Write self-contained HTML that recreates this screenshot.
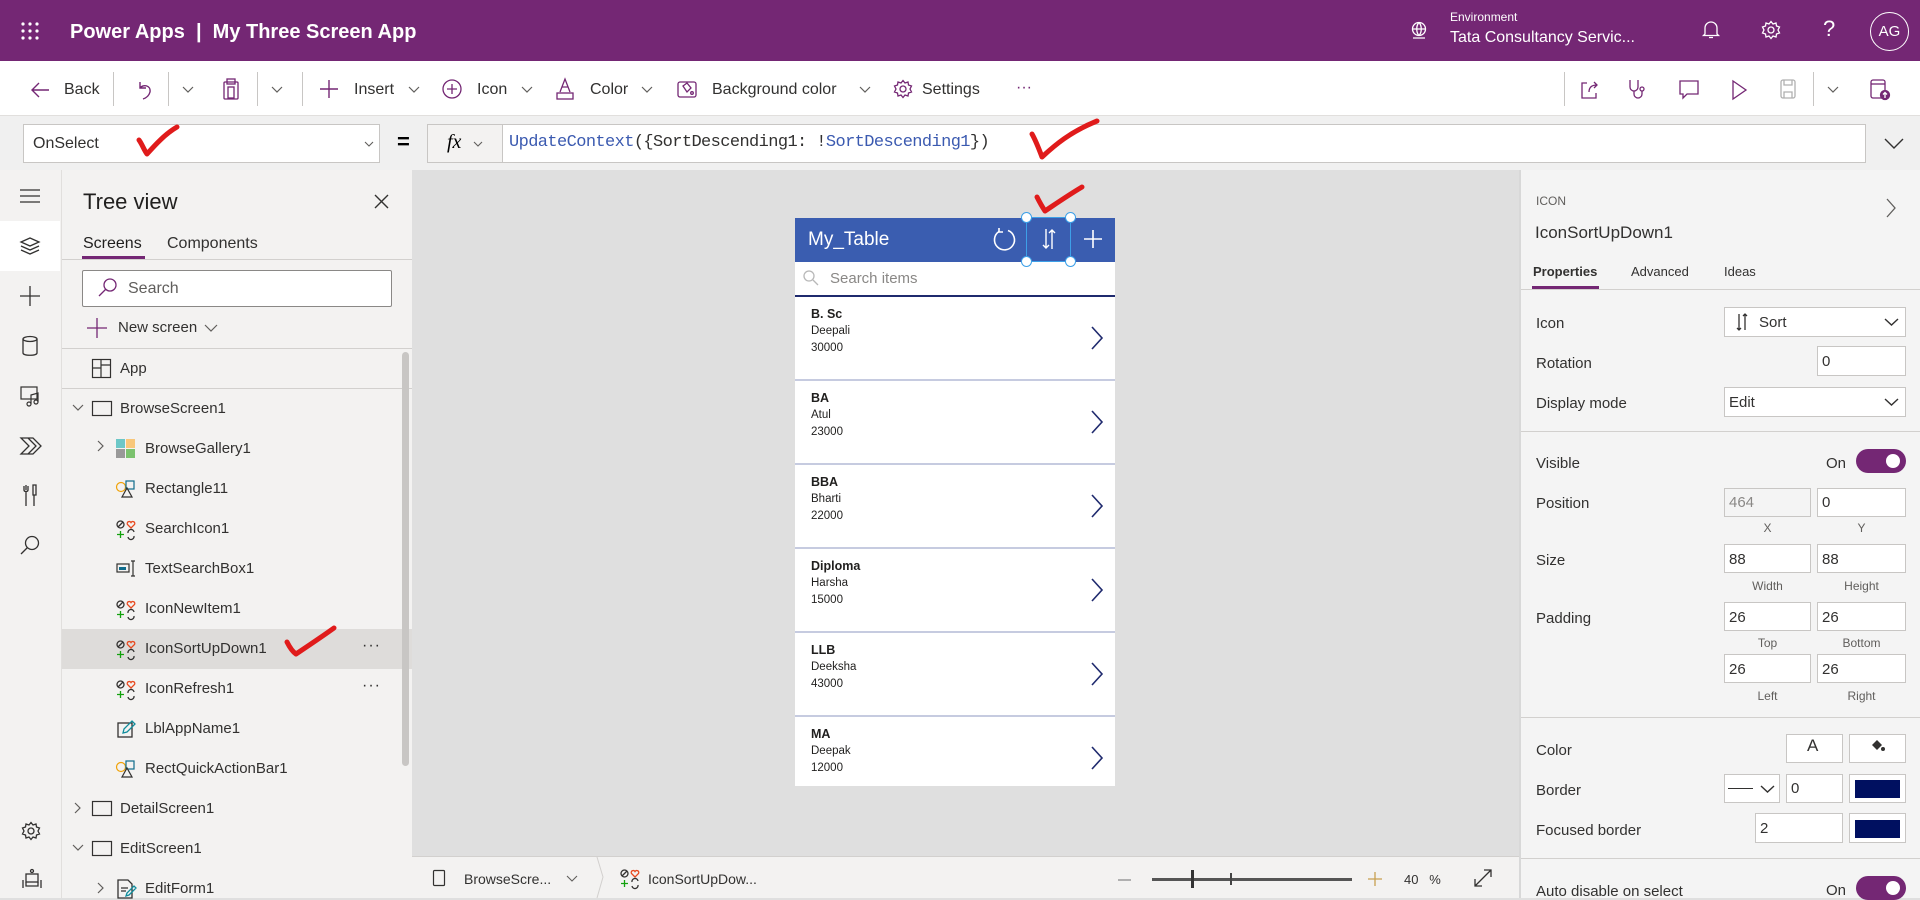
<!DOCTYPE html>
<html><head><meta charset="utf-8"><style>
*{box-sizing:border-box;margin:0;padding:0}
body{width:1920px;height:898px;overflow:hidden;position:relative;font-family:"Liberation Sans",sans-serif;color:#323130;background:#dfdfdf}
.a{position:absolute}
.t{position:absolute;white-space:nowrap;line-height:1}
svg{position:absolute;overflow:visible}
.box{position:absolute;background:#fff;border:1px solid #c8c6c4}
.lbl{position:absolute;font-size:15px;color:#323130;white-space:nowrap;line-height:1}
.sm{position:absolute;font-size:12px;color:#605e5c;white-space:nowrap;line-height:1;text-align:center}
.bv{position:absolute;font-size:15px;color:#323130;line-height:1}
.row{position:absolute;left:795px;width:320px;height:84px;background:#fff;border-bottom:2px solid #c6cbe0}
.row b{position:absolute;left:16px;top:10px;font-size:12.5px;color:#201f1e}
.row span{position:absolute;left:16px;font-size:11.5px;color:#201f1e}
.ti{position:absolute;font-size:15px;color:#323130;white-space:nowrap;line-height:1}
.hd{position:absolute;width:11px;height:11px;border-radius:50%;background:#fff;border:1.3px solid #3da0e8;z-index:5}
</style></head><body>
<!-- header -->
<div class="a" style="left:0;top:0;width:1920px;height:61px;background:#742774"></div>
<svg style="left:21px;top:22px" width="18" height="18"><g fill="#fff"><circle cx="2" cy="2" r="1.6"/><circle cx="9" cy="2" r="1.6"/><circle cx="16" cy="2" r="1.6"/><circle cx="2" cy="9" r="1.6"/><circle cx="9" cy="9" r="1.6"/><circle cx="16" cy="9" r="1.6"/><circle cx="2" cy="16" r="1.6"/><circle cx="9" cy="16" r="1.6"/><circle cx="16" cy="16" r="1.6"/></g></svg>
<div class="t" style="left:70px;top:22px;font-size:20px;color:#fff;font-weight:bold">Power Apps&nbsp; |&nbsp; My Three Screen App</div>
<svg style="left:1410px;top:21px" width="20" height="20" fill="none" stroke="#fff" stroke-width="1.3"><circle cx="9" cy="8" r="6.5"/><path d="M2.5 8h13M9 1.5c-3 3-3 10 0 13M9 1.5c3 3 3 10 0 13M3 17h12"/></svg>
<div class="t" style="left:1450px;top:11px;font-size:12px;color:#fff">Environment</div>
<div class="t" style="left:1450px;top:30px;font-size:16px;color:#fff">Tata Consultancy Servic...</div>
<svg style="left:1702px;top:20px" width="18" height="20" fill="none" stroke="#fff" stroke-width="1.3"><path d="M3 14V8a6 6 0 0112 0v6l1.5 1.5h-15zM7 17.5h4"/></svg>
<svg style="left:1761px;top:20px" width="20" height="20" fill="none" stroke="#fff" stroke-width="1.3"><circle cx="10" cy="10" r="3"/><path d="M10 1.5l2 2.5 3-1 .5 3 3 1-1.5 3 1.5 3-3 1-.5 3-3-1-2 2.5-2-2.5-3 1-.5-3-3-1 1.5-3-1.5-3 3-1 .5-3 3 1z"/></svg>
<div class="t" style="left:1823px;top:18px;font-size:22px;color:#fff">?</div>
<div class="a" style="left:1870px;top:12px;width:39px;height:39px;border:1.3px solid #fff;border-radius:50%;color:#fff;font-size:15px;text-align:center;line-height:37px">AG</div>
<!-- toolbar -->
<div class="a" style="left:0;top:61px;width:1920px;height:55px;background:#fff;border-bottom:1px solid #e1dfdd"></div>
<svg style="left:30px;top:81px" width="20" height="18" fill="none" stroke="#742774" stroke-width="1.4"><path d="M19 9H2M9 2L2 9l7 7"/></svg>
<div class="t" style="left:64px;top:82px;font-size:16px">Back</div>
<div class="a" style="left:113px;top:72px;width:1px;height:34px;background:#c8c6c4"></div>
<svg style="left:136px;top:80px" width="18" height="20" fill="none" stroke="#742774" stroke-width="1.4"><path d="M4 2v6h6M4 8c3-4 11-3 10 4-1 4-4 6-7 7"/></svg>
<div class="a" style="left:168px;top:72px;width:1px;height:34px;background:#c8c6c4"></div>
<svg style="left:182px;top:86px" width="12" height="8" fill="none" stroke="#605e5c" stroke-width="1.2"><path d="M1 1l5 5 5-5"/></svg>
<svg style="left:223px;top:78px" width="16" height="22" fill="none" stroke="#742774" stroke-width="1.3"><rect x="1" y="4" width="14" height="17" rx="1"/><rect x="4" y="1" width="8" height="5"/><rect x="5" y="9" width="6" height="11"/></svg>
<div class="a" style="left:257px;top:72px;width:1px;height:34px;background:#c8c6c4"></div>
<svg style="left:271px;top:86px" width="12" height="8" fill="none" stroke="#605e5c" stroke-width="1.2"><path d="M1 1l5 5 5-5"/></svg>
<div class="a" style="left:302px;top:72px;width:1px;height:34px;background:#c8c6c4"></div>
<svg style="left:320px;top:80px" width="18" height="18" fill="none" stroke="#742774" stroke-width="1.4"><path d="M9 0v18M0 9h18"/></svg>
<div class="t" style="left:354px;top:82px;font-size:16px">Insert</div>
<svg style="left:408px;top:86px" width="12" height="8" fill="none" stroke="#605e5c" stroke-width="1.2"><path d="M1 1l5 5 5-5"/></svg>
<svg style="left:442px;top:79px" width="20" height="20" fill="none" stroke="#742774" stroke-width="1.3"><circle cx="10" cy="10" r="9"/><path d="M10 5v10M5 10h10"/></svg>
<div class="t" style="left:477px;top:82px;font-size:16px">Icon</div>
<svg style="left:521px;top:86px" width="12" height="8" fill="none" stroke="#605e5c" stroke-width="1.2"><path d="M1 1l5 5 5-5"/></svg>
<svg style="left:556px;top:78px" width="18" height="22" fill="none" stroke="#742774" stroke-width="1.3"><path d="M4 14L9 1l5 13M6 9h6"/><rect x="1" y="15" width="16" height="6"/></svg>
<div class="t" style="left:590px;top:82px;font-size:16px">Color</div>
<svg style="left:641px;top:86px" width="12" height="8" fill="none" stroke="#605e5c" stroke-width="1.2"><path d="M1 1l5 5 5-5"/></svg>
<svg style="left:677px;top:79px" width="20" height="20" fill="none" stroke="#742774" stroke-width="1.3"><rect x="1" y="3" width="18" height="15" rx="2"/><path d="M6 7l4-3 4 5-4 4z"/><circle cx="15" cy="14" r="1.3"/></svg>
<div class="t" style="left:712px;top:82px;font-size:16px">Background color</div>
<svg style="left:859px;top:86px" width="12" height="8" fill="none" stroke="#605e5c" stroke-width="1.2"><path d="M1 1l5 5 5-5"/></svg>
<svg style="left:893px;top:79px" width="20" height="20" fill="none" stroke="#742774" stroke-width="1.3"><circle cx="10" cy="10" r="3"/><path d="M10 1.5l2 2.5 3-1 .5 3 3 1-1.5 3 1.5 3-3 1-.5 3-3-1-2 2.5-2-2.5-3 1-.5-3-3-1 1.5-3-1.5-3 3-1 .5-3 3 1z"/></svg>
<div class="t" style="left:922px;top:82px;font-size:16px">Settings</div>
<div class="t" style="left:1016px;top:80px;font-size:16px;color:#742774">···</div>
<div class="a" style="left:1564px;top:72px;width:1px;height:34px;background:#c8c6c4"></div>
<svg style="left:1580px;top:80px" width="20" height="20" fill="none" stroke="#742774" stroke-width="1.3"><path d="M7 3H2v15h14v-5M9 12c0-5 3-7 8-7M14 2l3 3-3 3"/></svg>
<svg style="left:1627px;top:79px" width="20" height="22" fill="none" stroke="#742774" stroke-width="1.3"><path d="M3 1v7a4 4 0 008 0V1M7 12v3a4 4 0 008 0v-3"/><circle cx="15" cy="10" r="2"/></svg>
<svg style="left:1679px;top:80px" width="20" height="20" fill="none" stroke="#742774" stroke-width="1.3"><path d="M1 1h18v13H8l-4 4v-4H1z"/></svg>
<svg style="left:1731px;top:80px" width="16" height="20" fill="none" stroke="#742774" stroke-width="1.3"><path d="M2 1l13 9-13 9z"/></svg>
<svg style="left:1780px;top:79px" width="16" height="20" fill="none" stroke="#b0b0b0" stroke-width="1.3"><rect x="1" y="1" width="14" height="18" rx="2"/><path d="M4 1v5h8V1M4 19v-6h8v6"/></svg>
<div class="a" style="left:1813px;top:72px;width:1px;height:34px;background:#c8c6c4"></div>
<svg style="left:1827px;top:86px" width="12" height="8" fill="none" stroke="#605e5c" stroke-width="1.2"><path d="M1 1l5 5 5-5"/></svg>
<svg style="left:1870px;top:79px" width="20" height="22" fill="none" stroke="#742774" stroke-width="1.3"><rect x="1" y="1" width="14" height="18" rx="2"/><path d="M1 5h14"/><circle cx="15" cy="16" r="4.5" fill="#742774"/><path d="M15 19v-5M13 15.5l2-2 2 2" stroke="#fff"/></svg>
<!-- formula bar -->
<div class="a" style="left:0;top:116px;width:1920px;height:54px;background:#f0f0f0"></div>
<div class="box" style="left:23px;top:124px;width:357px;height:39px"></div>
<div class="t" style="left:33px;top:136px;font-size:16px;color:#323130">OnSelect</div>
<svg style="left:364px;top:141px" width="10" height="6" fill="none" stroke="#605e5c" stroke-width="1.1"><path d="M1 1l4 4 4-4"/></svg>
<div class="t" style="left:397px;top:131px;font-size:22px;font-weight:bold;color:#000">=</div>
<div class="a" style="left:427px;top:124px;width:76px;height:39px;background:#f3f2f1;border:1px solid #c8c6c4"></div>
<div class="t" style="left:447px;top:132px;font-size:20px;font-style:italic;font-family:'Liberation Serif',serif;color:#000">fx</div>
<svg style="left:473px;top:141px" width="10" height="6" fill="none" stroke="#605e5c" stroke-width="1.1"><path d="M1 1l4 4 4-4"/></svg>
<div class="box" style="left:502px;top:124px;width:1364px;height:39px"></div>
<div class="t" style="left:509px;top:134px;font-size:17px;font-family:'Liberation Mono',monospace;color:#323130;letter-spacing:-0.6px"><span style="color:#3b5ab0">UpdateContext</span>({SortDescending1: !<span style="color:#3b5ab0">SortDescending1</span>})</div>
<svg style="left:1884px;top:138px" width="20" height="12" fill="none" stroke="#323130" stroke-width="1.4"><path d="M1 1l9 9 9-9"/></svg>
<!-- left rail -->
<div class="a" style="left:0;top:170px;width:62px;height:728px;background:#f3f2f1;border-right:1px solid #e1dfdd"></div>
<div class="a" style="left:0;top:221px;width:60px;height:50px;background:#fff"></div>
<svg style="left:20px;top:189px" width="20" height="14" stroke="#323130" stroke-width="1.2"><path d="M0 1h20M0 7h20M0 13h20"/></svg>
<svg style="left:20px;top:237px" width="20" height="18" fill="none" stroke="#323130" stroke-width="1.3"><path d="M10 1l9 4-9 4-9-4zM1 9l9 4 9-4M1 13l9 4 9-4"/></svg>
<svg style="left:20px;top:286px" width="20" height="20" fill="none" stroke="#323130" stroke-width="1.3"><path d="M10 0v20M0 10h20"/></svg>
<svg style="left:22px;top:336px" width="16" height="20" fill="none" stroke="#323130" stroke-width="1.3"><ellipse cx="8" cy="3" rx="7" ry="2.5"/><path d="M1 3v14c0 3 14 3 14 0V3"/></svg>
<svg style="left:20px;top:386px" width="22" height="20" fill="none" stroke="#323130" stroke-width="1.2"><rect x="1" y="1" width="16" height="12"/><path d="M11 18V9l7-2v9"/><circle cx="9" cy="18" r="2"/><circle cx="16" cy="16" r="2"/></svg>
<svg style="left:20px;top:437px" width="22" height="18" fill="none" stroke="#323130" stroke-width="1.3"><path d="M1 1h12l8 8-8 8H1l8-8zM8 17l8-8-8-8"/></svg>
<svg style="left:23px;top:484px" width="14" height="24" fill="none" stroke="#323130" stroke-width="1.3"><path d="M3 1v5M1 2v4c0 2 4 2 4 0V2M3 8v14M10 1h3v10h-3zM11 11v11"/></svg>
<svg style="left:20px;top:535px" width="20" height="20" fill="none" stroke="#323130" stroke-width="1.3"><circle cx="12" cy="8" r="6.5"/><path d="M7.5 12.5L1 19"/></svg>
<svg style="left:21px;top:821px" width="20" height="20" fill="none" stroke="#323130" stroke-width="1.3"><circle cx="10" cy="10" r="3"/><path d="M10 1.5l2 2.5 3-1 .5 3 3 1-1.5 3 1.5 3-3 1-.5 3-3-1-2 2.5-2-2.5-3 1-.5-3-3-1 1.5-3-1.5-3 3-1 .5-3 3 1z"/></svg>
<svg style="left:22px;top:868px" width="20" height="22" fill="none" stroke="#323130" stroke-width="1.3"><circle cx="10" cy="3" r="1.5"/><rect x="4" y="6" width="12" height="8"/><path d="M1 12v8M19 12v8M4 14v4h12v-4"/></svg>
<!-- tree panel -->
<div class="a" style="left:62px;top:170px;width:350px;height:728px;background:#f3f2f1"></div>
<div class="t" style="left:83px;top:191px;font-size:22px;color:#201f1e">Tree view</div>
<svg style="left:374px;top:194px" width="15" height="15" stroke="#323130" stroke-width="1.4"><path d="M1 1l13 13M14 1L1 14"/></svg>
<div class="t" style="left:83px;top:236px;font-size:16px;color:#201f1e">Screens</div>
<div class="t" style="left:167px;top:236px;font-size:16px;color:#323130">Components</div>
<div class="a" style="left:82px;top:256px;width:63px;height:3px;background:#742774"></div>
<div class="a" style="left:62px;top:259px;width:350px;height:1px;background:#d2d0ce"></div>
<div class="a" style="left:82px;top:270px;width:310px;height:37px;background:#fff;border:1px solid #8a8886;border-radius:2px"></div>
<svg style="left:98px;top:278px" width="20" height="20" fill="none" stroke-width="1.3"><circle cx="12" cy="7" r="6" stroke="#742774"/><path d="M8 11L1 18" stroke="#742774"/></svg>
<div class="t" style="left:128px;top:281px;font-size:16px;color:#605e5c">Search</div>
<svg style="left:87px;top:318px" width="20" height="20" stroke="#742774" stroke-width="1.3"><path d="M10 0v20M0 10h20"/></svg>
<div class="t" style="left:118px;top:320px;font-size:15px">New screen</div>
<svg style="left:204px;top:324px" width="14" height="8" fill="none" stroke="#605e5c" stroke-width="1.2"><path d="M1 1l6 6 6-6"/></svg>
<div class="a" style="left:62px;top:348px;width:350px;height:1px;background:#d2d0ce"></div>
<div class="a" style="left:62px;top:388px;width:350px;height:1px;background:#d2d0ce"></div>
<div class="a" style="left:62px;top:629px;width:350px;height:40px;background:#dedcda"></div>
<div class="a" style="left:402px;top:352px;width:7px;height:414px;background:#c8c6c4;border-radius:4px"></div>
<!-- tree items -->
<svg style="left:92px;top:359px" width="19" height="19" fill="none" stroke="#323130" stroke-width="1.2"><rect x=".5" y=".5" width="18" height="18"/><path d="M9 .5v18M.5 9h8.5M9 6h9.5"/></svg>
<div class="ti" style="left:120px;top:361px">App</div>
<svg style="left:72px;top:404px" width="12" height="7" fill="none" stroke="#605e5c" stroke-width="1.2"><path d="M1 1l5 5 5-5"/></svg>
<svg style="left:92px;top:401px" width="20" height="15" fill="none" stroke="#323130" stroke-width="1.2"><rect x=".5" y=".5" width="19" height="14"/></svg>
<div class="ti" style="left:120px;top:401px">BrowseScreen1</div>
<svg style="left:97px;top:440px" width="7" height="12" fill="none" stroke="#605e5c" stroke-width="1.2"><path d="M1 1l5 5-5 5"/></svg>
<svg style="left:116px;top:439px" width="19" height="19"><rect width="9" height="9" fill="#6cc7c7"/><rect x="10" width="9" height="9" fill="#f8c77a"/><rect y="10" width="9" height="9" fill="#999"/><rect x="10" y="10" width="9" height="9" fill="#7bc26e"/></svg>
<div class="ti" style="left:145px;top:441px">BrowseGallery1</div>
<svg style="left:116px;top:480px" width="20" height="18" fill="none" stroke-width="1.2"><circle cx="5" cy="7" r="4.5" stroke="#f0a30a"/><rect x="10" y="1" width="8" height="8" stroke="#0f6c8c"/><path d="M6 17l5-9 5 9z" stroke="#323130"/></svg>
<div class="ti" style="left:145px;top:481px">Rectangle11</div>
<svg style="left:116px;top:520px" width="20" height="19" fill="none" stroke-width="1.3"><circle cx="4.5" cy="4.5" r="3.5" stroke="#323130"/><path d="M2 7l5-5" stroke="#323130"/><path d="M15 8l-3.5-3.5a2 2 0 013.5-2 2 2 0 013.5 2z" stroke="#e8491e"/><path d="M4.5 11v7M1 14.5h7" stroke="#13a10e"/><path d="M12 13a3 3 0 016-1M18 16a3 3 0 01-6 1" stroke="#323130"/></svg>
<div class="ti" style="left:145px;top:521px">SearchIcon1</div>
<svg style="left:116px;top:560px" width="20" height="18" fill="none" stroke-width="1.2"><rect x="1" y="4" width="12" height="8" stroke="#323130"/><rect x="3" y="7" width="7" height="3" fill="#0f6c8c" stroke="none"/><path d="M15 1h4M17 1v15M15 16h4" stroke="#323130"/></svg>
<div class="ti" style="left:145px;top:561px">TextSearchBox1</div>
<svg style="left:116px;top:600px" width="20" height="19" fill="none" stroke-width="1.3"><circle cx="4.5" cy="4.5" r="3.5" stroke="#323130"/><path d="M2 7l5-5" stroke="#323130"/><path d="M15 8l-3.5-3.5a2 2 0 013.5-2 2 2 0 013.5 2z" stroke="#e8491e"/><path d="M4.5 11v7M1 14.5h7" stroke="#13a10e"/><path d="M12 13a3 3 0 016-1M18 16a3 3 0 01-6 1" stroke="#323130"/></svg>
<div class="ti" style="left:145px;top:601px">IconNewItem1</div>
<svg style="left:116px;top:640px" width="20" height="19" fill="none" stroke-width="1.3"><circle cx="4.5" cy="4.5" r="3.5" stroke="#323130"/><path d="M2 7l5-5" stroke="#323130"/><path d="M15 8l-3.5-3.5a2 2 0 013.5-2 2 2 0 013.5 2z" stroke="#e8491e"/><path d="M4.5 11v7M1 14.5h7" stroke="#13a10e"/><path d="M12 13a3 3 0 016-1M18 16a3 3 0 01-6 1" stroke="#323130"/></svg>
<div class="ti" style="left:145px;top:641px">IconSortUpDown1</div>
<div class="t" style="left:362px;top:638px;font-size:16px;letter-spacing:1px">···</div>
<svg style="left:116px;top:680px" width="20" height="19" fill="none" stroke-width="1.3"><circle cx="4.5" cy="4.5" r="3.5" stroke="#323130"/><path d="M2 7l5-5" stroke="#323130"/><path d="M15 8l-3.5-3.5a2 2 0 013.5-2 2 2 0 013.5 2z" stroke="#e8491e"/><path d="M4.5 11v7M1 14.5h7" stroke="#13a10e"/><path d="M12 13a3 3 0 016-1M18 16a3 3 0 01-6 1" stroke="#323130"/></svg>
<div class="ti" style="left:145px;top:681px">IconRefresh1</div>
<div class="t" style="left:362px;top:678px;font-size:16px;letter-spacing:1px">···</div>
<svg style="left:117px;top:720px" width="18" height="18" fill="none" stroke-width="1.3"><rect x="1" y="3" width="14" height="14" stroke="#323130"/><path d="M6 13l1-4 8-8 3 3-8 8z" stroke="#0f8c9c"/></svg>
<div class="ti" style="left:145px;top:721px">LblAppName1</div>
<svg style="left:116px;top:760px" width="20" height="18" fill="none" stroke-width="1.2"><circle cx="5" cy="7" r="4.5" stroke="#f0a30a"/><rect x="10" y="1" width="8" height="8" stroke="#0f6c8c"/><path d="M6 17l5-9 5 9z" stroke="#323130"/></svg>
<div class="ti" style="left:145px;top:761px">RectQuickActionBar1</div>
<svg style="left:74px;top:802px" width="7" height="12" fill="none" stroke="#605e5c" stroke-width="1.2"><path d="M1 1l5 5-5 5"/></svg>
<svg style="left:92px;top:801px" width="20" height="15" fill="none" stroke="#323130" stroke-width="1.2"><rect x=".5" y=".5" width="19" height="14"/></svg>
<div class="ti" style="left:120px;top:801px">DetailScreen1</div>
<svg style="left:72px;top:844px" width="12" height="7" fill="none" stroke="#605e5c" stroke-width="1.2"><path d="M1 1l5 5 5-5"/></svg>
<svg style="left:92px;top:841px" width="20" height="15" fill="none" stroke="#323130" stroke-width="1.2"><rect x=".5" y=".5" width="19" height="14"/></svg>
<div class="ti" style="left:120px;top:841px">EditScreen1</div>
<svg style="left:97px;top:882px" width="7" height="12" fill="none" stroke="#605e5c" stroke-width="1.2"><path d="M1 1l5 5-5 5"/></svg>
<svg style="left:117px;top:879px" width="20" height="20" fill="none" stroke-width="1.3"><path d="M1 1h10l4 4v14H1z" stroke="#323130"/><path d="M4 9h7M4 12h5" stroke="#323130"/><path d="M9 17l1-3 7-7 2 2-7 7z" stroke="#0f8c9c"/></svg>
<div class="ti" style="left:145px;top:881px">EditForm1</div>
<!-- canvas bottom bar -->
<div class="a" style="left:412px;top:856px;width:1108px;height:42px;background:#f3f2f1;border-top:1px solid #d2d0ce"></div>
<svg style="left:433px;top:870px" width="12" height="16" fill="none" stroke="#323130" stroke-width="1.2"><rect x=".5" y=".5" width="11" height="15" rx="1"/></svg>
<div class="t" style="left:464px;top:872px;font-size:14px">BrowseScre...</div>
<svg style="left:566px;top:875px" width="12" height="7" fill="none" stroke="#605e5c" stroke-width="1.1"><path d="M1 1l5 5 5-5"/></svg>
<svg style="left:596px;top:857px" width="8" height="41" fill="none" stroke="#d2d0ce"><path d="M1 0l6 20-6 21"/></svg>
<svg style="left:620px;top:869px" width="20" height="19" fill="none" stroke-width="1.3"><circle cx="4.5" cy="4.5" r="3.5" stroke="#323130"/><path d="M2 7l5-5" stroke="#323130"/><path d="M15 8l-3.5-3.5a2 2 0 013.5-2 2 2 0 013.5 2z" stroke="#e8491e"/><path d="M4.5 11v7M1 14.5h7" stroke="#13a10e"/><path d="M12 13a3 3 0 016-1M18 16a3 3 0 01-6 1" stroke="#323130"/></svg>
<div class="t" style="left:648px;top:872px;font-size:14px">IconSortUpDow...</div>
<div class="a" style="left:1118px;top:879px;width:13px;height:2px;background:#b0b0b0"></div>
<div class="a" style="left:1152px;top:878px;width:200px;height:3px;background:#555"></div>
<div class="a" style="left:1191px;top:870px;width:3px;height:18px;background:#333"></div>
<div class="a" style="left:1230px;top:873px;width:2px;height:12px;background:#444"></div>
<svg style="left:1368px;top:872px" width="14" height="14" stroke="#c8a050" stroke-width="1.3"><path d="M7 0v14M0 7h14"/></svg>
<div class="t" style="left:1404px;top:873px;font-size:13px">40&nbsp;&nbsp; %</div>
<svg style="left:1474px;top:869px" width="18" height="18" fill="none" stroke="#323130" stroke-width="1.3"><path d="M1 17L17 1M10 1h7v7M1 10v7h7"/></svg>
<!-- phone -->
<div class="a" style="left:795px;top:218px;width:320px;height:44px;background:#3a5db0"></div>
<div class="t" style="left:808px;top:230px;font-size:19px;color:#fff">My_Table</div>
<svg style="left:993px;top:228px" width="24" height="24" fill="none" stroke="#fff" stroke-width="1.6"><path d="M15 2.5A10 10 0 1 1 6 3.5"/><path d="M6 0v4h4"/></svg>
<div class="a" style="left:1026px;top:217px;width:45px;height:45px;border:1px solid #3da0e8"></div>
<svg style="left:1042px;top:228px" width="14" height="22" fill="none" stroke="#fff" stroke-width="1.4"><path d="M4 1v19M1 17l3 3 3-3M10 21V2M7 5l3-3 3 3"/></svg>
<svg style="left:1084px;top:230px" width="18" height="18" stroke="#fff" stroke-width="1.6"><path d="M9 0v18M0 9h18"/></svg>
<div class="a" style="left:795px;top:262px;width:320px;height:35px;background:#fff;border-bottom:2px solid #1f2a6e"></div>
<div class="hd" style="left:1021px;top:212px"></div>
<div class="hd" style="left:1065px;top:212px"></div>
<div class="hd" style="left:1021px;top:256px"></div>
<div class="hd" style="left:1065px;top:256px"></div>
<svg style="left:803px;top:270px" width="16" height="16" fill="none" stroke="#b8b8b8" stroke-width="1.3"><circle cx="6" cy="6" r="5"/><path d="M10 10l5 5"/></svg>
<div class="t" style="left:830px;top:271px;font-size:15px;color:#8a8886">Search items</div>
<div class="row" style="top:297px"><b>B. Sc</b><span style="top:28px">Deepali</span><span style="top:45px">30000</span></div>
<div class="row" style="top:381px"><b>BA</b><span style="top:28px">Atul</span><span style="top:45px">23000</span></div>
<div class="row" style="top:465px"><b>BBA</b><span style="top:28px">Bharti</span><span style="top:45px">22000</span></div>
<div class="row" style="top:549px"><b>Diploma</b><span style="top:28px">Harsha</span><span style="top:45px">15000</span></div>
<div class="row" style="top:633px"><b>LLB</b><span style="top:28px">Deeksha</span><span style="top:45px">43000</span></div>
<div class="row" style="top:717px;height:69px;border-bottom:none"><b>MA</b><span style="top:28px">Deepak</span><span style="top:45px">12000</span></div>
<svg style="left:1091px;top:326px" width="12" height="24" fill="none" stroke="#1f2a6e" stroke-width="1.6"><path d="M1 1l10 11L1 23"/></svg>
<svg style="left:1091px;top:410px" width="12" height="24" fill="none" stroke="#1f2a6e" stroke-width="1.6"><path d="M1 1l10 11L1 23"/></svg>
<svg style="left:1091px;top:494px" width="12" height="24" fill="none" stroke="#1f2a6e" stroke-width="1.6"><path d="M1 1l10 11L1 23"/></svg>
<svg style="left:1091px;top:578px" width="12" height="24" fill="none" stroke="#1f2a6e" stroke-width="1.6"><path d="M1 1l10 11L1 23"/></svg>
<svg style="left:1091px;top:662px" width="12" height="24" fill="none" stroke="#1f2a6e" stroke-width="1.6"><path d="M1 1l10 11L1 23"/></svg>
<svg style="left:1091px;top:746px" width="12" height="24" fill="none" stroke="#1f2a6e" stroke-width="1.6"><path d="M1 1l10 11L1 23"/></svg>
<!-- right panel -->
<div class="a" style="left:1519px;top:170px;width:401px;height:728px;background:#f4f4f4;border-left:2px solid #d8d8d8"></div>
<div class="t" style="left:1536px;top:195px;font-size:12px;color:#605e5c">ICON</div>
<svg style="left:1886px;top:198px" width="10" height="20" fill="none" stroke="#605e5c" stroke-width="1.3"><path d="M1 1l8 9-8 9"/></svg>
<div class="t" style="left:1535px;top:224px;font-size:17px;color:#323130">IconSortUpDown1</div>
<div class="t" style="left:1533px;top:265px;font-size:13px;font-weight:bold;color:#323130">Properties</div>
<div class="t" style="left:1631px;top:265px;font-size:13px;color:#323130">Advanced</div>
<div class="t" style="left:1724px;top:265px;font-size:13px;color:#323130">Ideas</div>
<div class="a" style="left:1532px;top:286px;width:67px;height:3px;background:#742774"></div>
<div class="a" style="left:1521px;top:289px;width:399px;height:1px;background:#d2d0ce"></div>
<div class="lbl" style="left:1536px;top:316px">Icon</div>
<div class="box" style="left:1724px;top:307px;width:182px;height:30px"></div>
<svg style="left:1736px;top:313px" width="12" height="18" fill="none" stroke="#323130" stroke-width="1.3"><path d="M3 1v16M1 15l2 2 2-2M9 17V1M7 3l2-2 2 2"/></svg>
<div class="bv" style="left:1759px;top:315px">Sort</div>
<svg style="left:1884px;top:318px" width="15" height="8" fill="none" stroke="#323130" stroke-width="1.4"><path d="M1 1l6.5 6 6.5-6"/></svg>
<div class="lbl" style="left:1536px;top:356px">Rotation</div>
<div class="box" style="left:1817px;top:346px;width:89px;height:30px"></div>
<div class="bv" style="left:1822px;top:354px">0</div>
<div class="lbl" style="left:1536px;top:396px">Display mode</div>
<div class="box" style="left:1724px;top:387px;width:182px;height:30px"></div>
<div class="bv" style="left:1729px;top:395px">Edit</div>
<svg style="left:1884px;top:398px" width="15" height="8" fill="none" stroke="#323130" stroke-width="1.4"><path d="M1 1l6.5 6 6.5-6"/></svg>
<div class="a" style="left:1521px;top:431px;width:399px;height:1px;background:#d2d0ce"></div>
<div class="lbl" style="left:1536px;top:456px">Visible</div>
<div class="lbl" style="left:1826px;top:456px">On</div>
<div class="a" style="left:1856px;top:449px;width:50px;height:24px;border-radius:12px;background:#742774"></div>
<div class="a" style="left:1886px;top:454px;width:14px;height:14px;border-radius:50%;background:#fff"></div>
<div class="lbl" style="left:1536px;top:496px">Position</div>
<div class="box" style="left:1724px;top:488px;width:87px;height:29px;background:#f4f4f4"></div>
<div class="bv" style="left:1729px;top:495px;color:#8a8886">464</div>
<div class="box" style="left:1817px;top:488px;width:89px;height:29px"></div>
<div class="bv" style="left:1822px;top:495px">0</div>
<div class="sm" style="left:1724px;top:522px;width:87px">X</div>
<div class="sm" style="left:1817px;top:522px;width:89px">Y</div>
<div class="lbl" style="left:1536px;top:553px">Size</div>
<div class="box" style="left:1724px;top:544px;width:87px;height:29px"></div>
<div class="bv" style="left:1729px;top:552px">88</div>
<div class="box" style="left:1817px;top:544px;width:89px;height:29px"></div>
<div class="bv" style="left:1822px;top:552px">88</div>
<div class="sm" style="left:1724px;top:580px;width:87px">Width</div>
<div class="sm" style="left:1817px;top:580px;width:89px">Height</div>
<div class="lbl" style="left:1536px;top:611px">Padding</div>
<div class="box" style="left:1724px;top:602px;width:87px;height:29px"></div>
<div class="bv" style="left:1729px;top:610px">26</div>
<div class="box" style="left:1817px;top:602px;width:89px;height:29px"></div>
<div class="bv" style="left:1822px;top:610px">26</div>
<div class="sm" style="left:1724px;top:637px;width:87px">Top</div>
<div class="sm" style="left:1817px;top:637px;width:89px">Bottom</div>
<div class="box" style="left:1724px;top:654px;width:87px;height:29px"></div>
<div class="bv" style="left:1729px;top:662px">26</div>
<div class="box" style="left:1817px;top:654px;width:89px;height:29px"></div>
<div class="bv" style="left:1822px;top:662px">26</div>
<div class="sm" style="left:1724px;top:690px;width:87px">Left</div>
<div class="sm" style="left:1817px;top:690px;width:89px">Right</div>
<div class="a" style="left:1521px;top:717px;width:399px;height:1px;background:#d2d0ce"></div>
<div class="lbl" style="left:1536px;top:743px">Color</div>
<div class="box" style="left:1786px;top:734px;width:57px;height:29px"></div>
<div class="t" style="left:1807px;top:737px;font-size:17px">A</div>
<div class="box" style="left:1849px;top:734px;width:57px;height:29px"></div>
<svg style="left:1870px;top:739px" width="16" height="14"><path d="M2 6l5-5 5 5-5 5z" fill="#323130"/><circle cx="13" cy="10" r="2" fill="#323130"/></svg>
<div class="lbl" style="left:1536px;top:783px">Border</div>
<div class="box" style="left:1724px;top:774px;width:56px;height:29px"></div>
<div class="a" style="left:1728px;top:788px;width:25px;height:1px;background:#323130"></div>
<svg style="left:1760px;top:785px" width="15" height="8" fill="none" stroke="#323130" stroke-width="1.4"><path d="M1 1l6.5 6 6.5-6"/></svg>
<div class="box" style="left:1786px;top:774px;width:57px;height:29px"></div>
<div class="bv" style="left:1791px;top:781px">0</div>
<div class="box" style="left:1849px;top:774px;width:57px;height:29px"></div>
<div class="a" style="left:1855px;top:780px;width:45px;height:18px;background:#001060"></div>
<div class="lbl" style="left:1536px;top:823px">Focused border</div>
<div class="box" style="left:1755px;top:813px;width:88px;height:30px"></div>
<div class="bv" style="left:1760px;top:821px">2</div>
<div class="box" style="left:1849px;top:813px;width:57px;height:30px"></div>
<div class="a" style="left:1855px;top:820px;width:45px;height:18px;background:#001060"></div>
<div class="a" style="left:1521px;top:858px;width:399px;height:1px;background:#d2d0ce"></div>
<div class="lbl" style="left:1536px;top:884px">Auto disable on select</div>
<div class="lbl" style="left:1826px;top:883px">On</div>
<div class="a" style="left:1856px;top:876px;width:50px;height:24px;border-radius:12px;background:#742774"></div>
<div class="a" style="left:1886px;top:881px;width:14px;height:14px;border-radius:50%;background:#fff"></div>
<!-- red checkmarks -->
<svg style="left:0;top:0;z-index:6" width="1920" height="898" fill="none" stroke="#e01b1b" stroke-width="5" stroke-linecap="round" stroke-linejoin="round">
<path d="M139 140c3 4 5 10 8 14 8-9 18-20 30-27"/>
<path d="M1032 134c4 7 7 15 10 23 13-12 28-25 55-36"/>
<path d="M1037 197c3 6 6 11 8 14 12-8 22-15 37-24"/>
<path d="M287 642c3 6 6 10 9 12 12-8 24-16 38-26"/>
</svg>
</body></html>
